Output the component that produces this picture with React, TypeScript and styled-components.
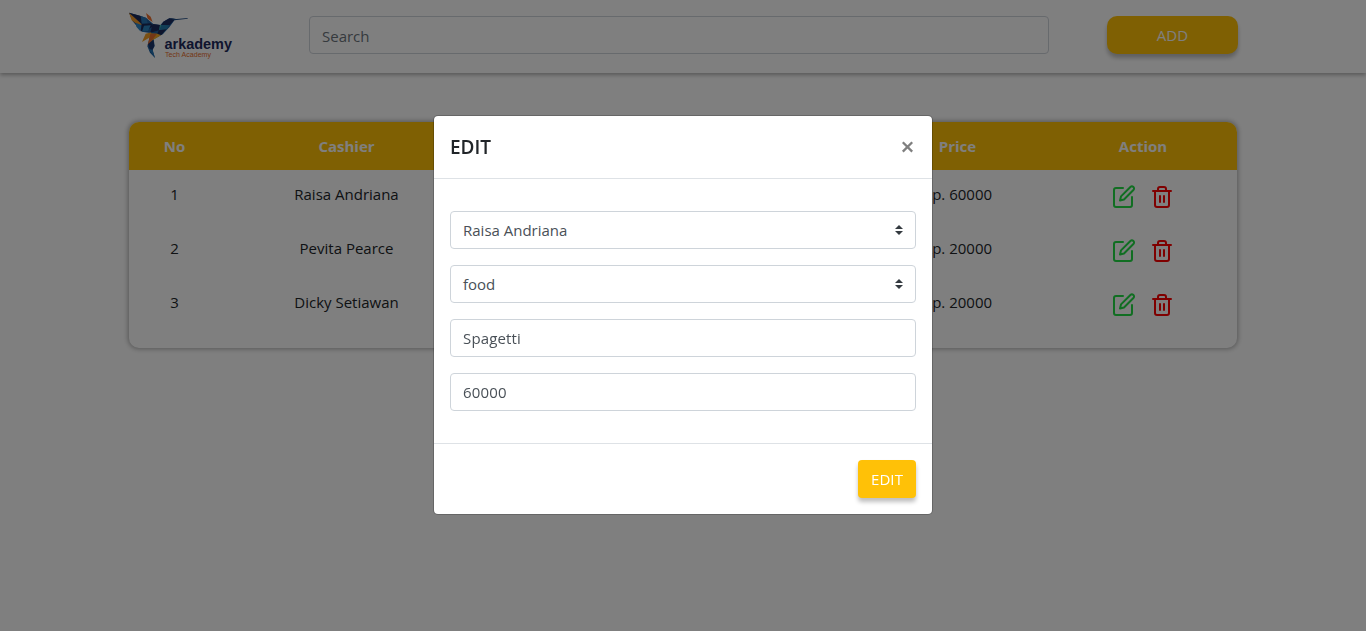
import React from "react";
import styled, { createGlobalStyle } from "styled-components";

const GlobalStyle = createGlobalStyle`
  *, *::before, *::after { box-sizing: border-box; }
  body {
    margin: 0;
    overflow: hidden;
    background: #fff;
    color: #212529;
    font-family: "Open Sans", "Noto Sans", sans-serif;
    font-size: 15px;
    line-height: 24px;
  }
  button, input, select { font: inherit; letter-spacing: inherit; }
`;

const Page = styled.div`
  min-height: 631px;
`;

const Navbar = styled.header`
  display: flex;
  align-items: flex-start;
  height: 73px;
  padding: 0 128px 0 129px;
  box-shadow: 0 2px 4px rgba(0, 0, 0, 0.3);
`;

const Logo = styled.svg`
  display: block;
  width: 106px;
  height: 50px;
  margin: 11px 74px 0 0;
`;

const fieldBase = `
  display: block;
  width: 100%;
  height: 38px;
  padding: 6px 12px;
  border: 1px solid #ced4da;
  border-radius: 4px;
  background: #fff;
  color: #495057;
  outline: none;
`;

const SearchInput = styled.input`
  ${fieldBase}
  width: 740px;
  margin-top: 16px;
  padding: 7px 12px 5px;
  &::placeholder { color: #6c757d; opacity: 1; }
`;

const YellowButton = styled.button<{ $wide?: boolean }>`
  display: block;
  height: 38px;
  width: ${(p) => (p.$wide ? "131px" : "58px")};
  padding: 0 0 1px;
  border: 0;
  border-radius: ${(p) => (p.$wide ? "10px" : "4px")};
  background: #ffc107;
  color: #fff;
  box-shadow: 0 4px 4px rgba(0, 0, 0, 0.25);
  letter-spacing: 0.1px;
`;

const AddSlot = styled.div`
  margin: 16px 0 0 auto;
`;

const TableCard = styled.main`
  width: 1108px;
  height: 226px;
  margin: 49px 0 0 129px;
  border-radius: 10px;
  overflow: hidden;
  box-shadow: 0 0 5px 1px rgba(0, 0, 0, 0.32);
`;

const Row = styled.div<{ $head?: boolean }>`
  display: grid;
  grid-template-columns: 91px 253px 196px 197px 183px 188px;
  height: ${(p) => (p.$head ? "48px" : "54px")};
  padding-top: 12px;
  background: ${(p) => (p.$head ? "#ffc107" : "transparent")};
  color: ${(p) => (p.$head ? "#fff" : "#212529")};
  font-weight: ${(p) => (p.$head ? 700 : 400)};
  text-align: center;
`;

const Actions = styled.div`
  display: flex;
  justify-content: center;
  gap: 14px;
  padding-top: 3px;
`;

const Icon = styled.svg`
  display: block;
  width: 24px;
  height: 24px;
  fill: none;
  stroke-width: 2;
  stroke-linecap: round;
  stroke-linejoin: round;
`;

const Backdrop = styled.div`
  position: fixed;
  inset: 0;
  display: flex;
  align-items: center;
  justify-content: center;
  padding-bottom: 1px;
  background: rgba(0, 0, 0, 0.5);
`;

const Dialog = styled.section`
  width: 500px;
  height: 400px;
  border: 1px solid rgba(0, 0, 0, 0.2);
  border-radius: 5px;
  background: #fff;
  background-clip: padding-box;
`;

const DialogHeader = styled.div`
  display: flex;
  align-items: center;
  justify-content: space-between;
  height: 63px;
  padding: 0 18px 0 16px;
  border-bottom: 1px solid #dee2e6;
`;

const Title = styled.h5`
  margin: 0;
  font-size: 19px;
  font-weight: 600;
  line-height: 30px;
`;

const CloseButton = styled.button`
  display: flex;
  padding: 0;
  border: 0;
  background: none;
`;

const DialogBody = styled.div`
  display: flex;
  flex-direction: column;
  gap: 16px;
  padding: 32px 16px;
`;

const TextField = styled.input`
  ${fieldBase}
  letter-spacing: 0.15px;
`;

const SelectField = styled.div`
  ${fieldBase}
  display: flex;
  align-items: center;
  justify-content: space-between;
`;

const DialogFooter = styled.div`
  display: flex;
  justify-content: flex-end;
  padding: 16px;
  border-top: 1px solid #dee2e6;
`;

const orders = [
  { cashier: "Raisa Andriana", price: 60000 },
  { cashier: "Pevita Pearce", price: 20000 },
  { cashier: "Dicky Setiawan", price: 20000 },
];

const ArkademyLogo = () => (
  <Logo viewBox="0 0 106 50">
    <g transform="translate(-9 -11) scale(.3333)">
      <path d="M27 38 60 47 78 53 100 72 121 75 130 65 148 55 166 57 148 82 128 103 101 118 104 138 98 149 105 174 90 158 82 139 91 105 90 99 66 95 50 78 38 64Z" fill="#1f5f9f" />
      <path d="M27 38 48 53 66 74 58 77 35 61Z" fill="#f39a2b" />
      <path d="M27 38 62 48 65 72Z" fill="#1c2a59" />
      <path d="M48 69 67 76 61 94 49 80Z" fill="#2c86c8" />
      <path d="M62 48 79 54 83 71 66 69Z" fill="#2774b5" />
      <path d="M65 72 92 70 101 78 77 92 62 94Z" fill="#1a2858" />
      <path d="M72 77 92 76 84 93 66 95Z" fill="#2b83bf" />
      <path d="M78 39 92 50 98 66 83 56Z" fill="#ee7130" />
      <path d="M98 72 120 75 117 91 91 98Z" fill="#1b2a5c" />
      <path d="M120 75 137 76 133 91 116 99Z" fill="#41b6a4" />
      <path d="M130 65 148 55 166 57 148 76 124 75Z" fill="#1c2d60" />
      <path d="M148 55 170 57 203 54 203 56 164 61Z" fill="#214c84" />
      <path d="M124 75 148 76 128 103 115 97Z" fill="#217aae" />
      <path d="M116 91 139 88 125 104 111 104Z" fill="#1c2858" />
      <path d="M66 126 77 101 94 97 90 112Z" fill="#f2a128" />
      <path d="M90 100 112 101 123 106 99 120 86 133Z" fill="#f6ad25" />
      <path d="M91 101 111 101 90 130 83 135Z" fill="#e96e2e" />
      <path d="M84 132 100 119 103 138 97 150 90 150Z" fill="#1d346a" />
      <path d="M87 147 97 149 105 174Z" fill="#2475b4" />
    </g>
    <text x="35.5" y="38" textLength="67.5" lengthAdjust="spacingAndGlyphs" fill="#202a5d" fontFamily="Liberation Sans, sans-serif" fontSize="14.6" fontWeight="700">arkademy</text>
    <text x="36" y="45.6" textLength="46" lengthAdjust="spacingAndGlyphs" fill="#e96c2a" fontFamily="Liberation Sans, sans-serif" fontSize="7.4">Tech Academy</text>
  </Logo>
);

const EditIcon = () => (
  <Icon viewBox="0 0 24 24" stroke="#22dd44">
    <path d="M11 3H4a2 2 0 0 0-2 2v15a2 2 0 0 0 2 2h14a2 2 0 0 0 2-2v-8" />
    <path d="M18.4 2a2 2 0 0 1 3 3L12 14.5 8 15.5 9 11.4Z" />
  </Icon>
);

const TrashIcon = () => (
  <Icon viewBox="0 0 24 24" stroke="#f00">
    <path d="M3 6h18M5 6v14a2 2 0 0 0 2 2h10a2 2 0 0 0 2-2V6M8 6V4a2 2 0 0 1 2-2h4a2 2 0 0 1 2 2v2M10 11v6M14 11v6" />
  </Icon>
);

const Caret = () => (
  <svg width="8" height="10" viewBox="0 0 4 5">
    <path fill="#343a40" d="M2 0 0 2h4zm0 5L0 3h4z" />
  </svg>
);

export default function App() {
  return (
    <>
      <GlobalStyle />
      <Page>
        <Navbar>
          <ArkademyLogo />
          <SearchInput placeholder="Search" />
          <AddSlot><YellowButton $wide>ADD</YellowButton></AddSlot>
        </Navbar>
        <TableCard>
          <Row $head>
            <span>No</span><span>Cashier</span><span /><span /><span>Price</span><span>Action</span>
          </Row>
          {orders.map((order, i) => (
            <Row key={order.cashier}>
              <span>{i + 1}</span>
              <span>{order.cashier}</span>
              <span />
              <span />
              <span>Rp. {order.price}</span>
              <Actions><EditIcon /><TrashIcon /></Actions>
            </Row>
          ))}
        </TableCard>
      </Page>
      <Backdrop>
        <Dialog role="dialog">
          <DialogHeader>
            <Title>EDIT</Title>
            <CloseButton aria-label="Close">
              <svg width="13" height="12" viewBox="0 0 13 12"><path d="m1.8 1.2 9.4 9.4m0-9.4-9.4 9.4" stroke="#7f7f7f" strokeWidth="2.3" /></svg>
            </CloseButton>
          </DialogHeader>
          <DialogBody>
            <SelectField>Raisa Andriana<Caret /></SelectField>
            <SelectField>food<Caret /></SelectField>
            <TextField defaultValue="Spagetti" />
            <TextField defaultValue="60000" />
          </DialogBody>
          <DialogFooter><YellowButton>EDIT</YellowButton></DialogFooter>
        </Dialog>
      </Backdrop>
    </>
  );
}
